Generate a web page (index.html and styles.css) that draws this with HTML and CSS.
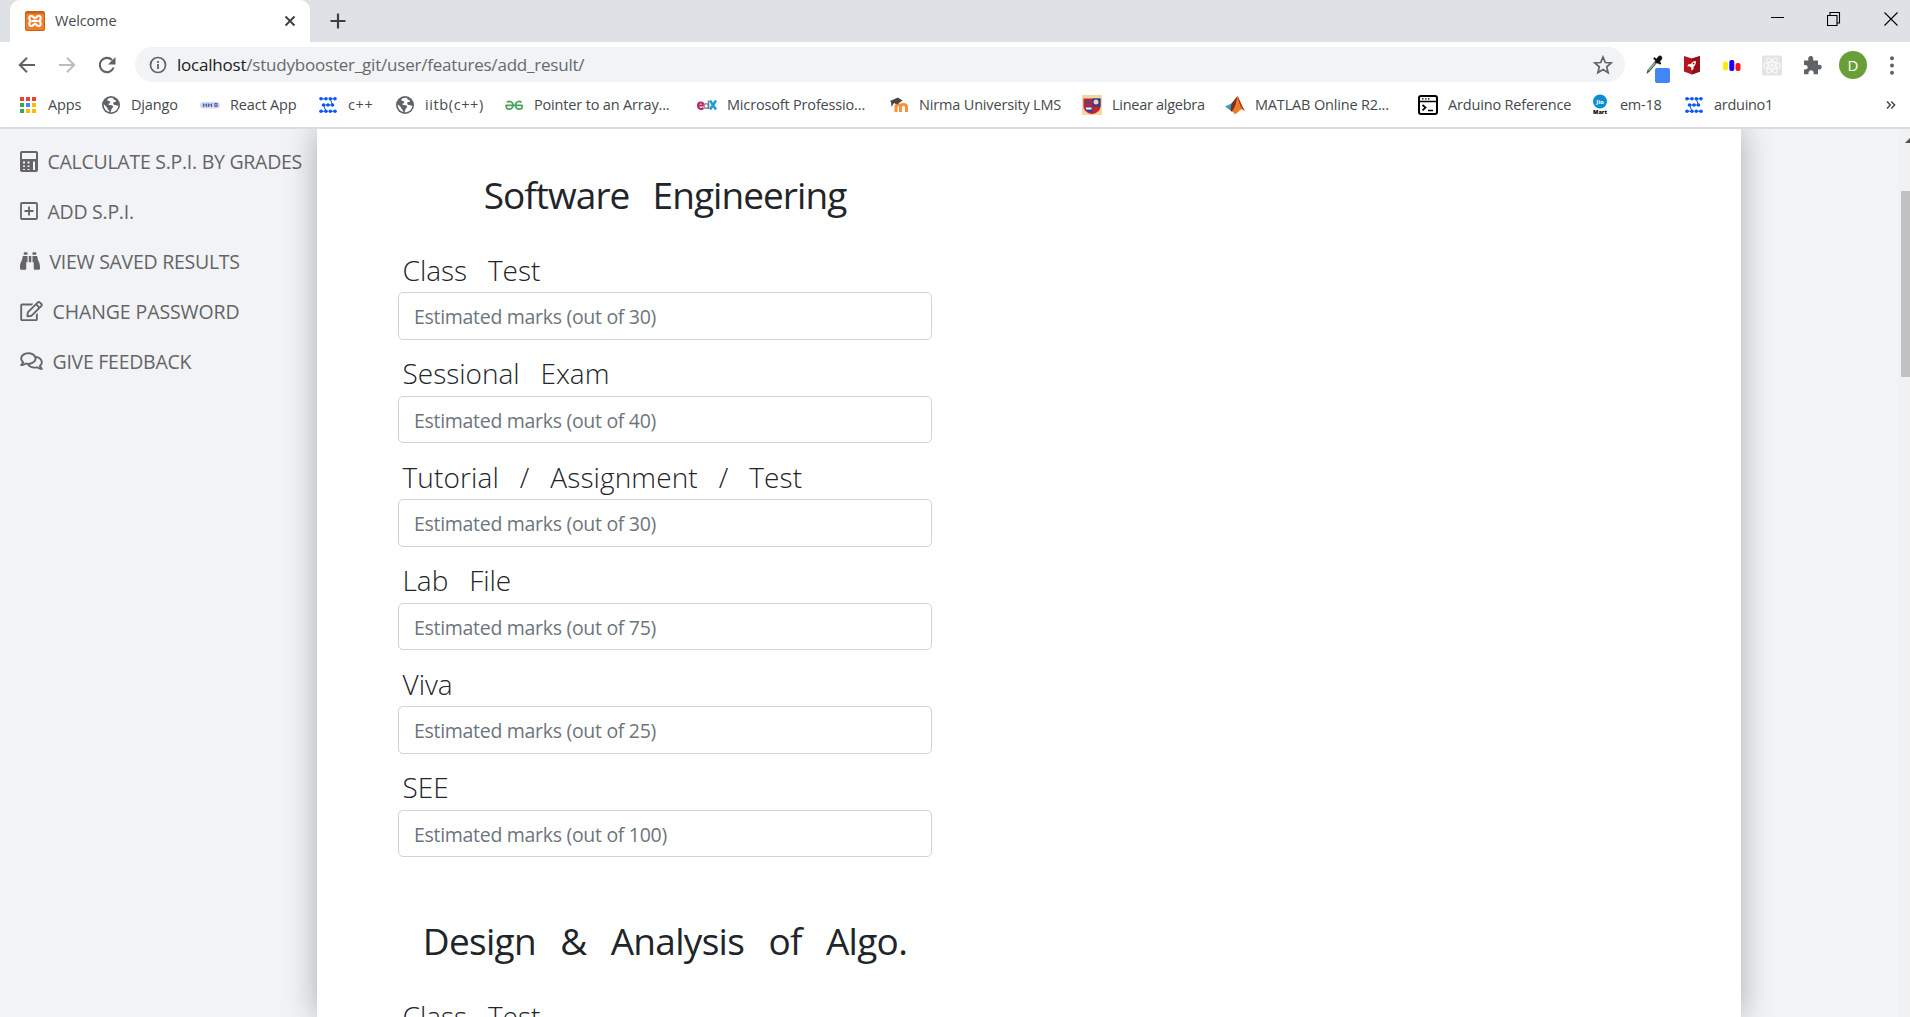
FILE: index.html
```html
<!DOCTYPE html>
<html lang="en">
<head>
<meta charset="utf-8">
<title>Welcome</title>
<link rel="stylesheet" href="styles.css">
</head>
<body>
<svg class="defs" width="0" height="0" aria-hidden="true">
  <symbol id="globe" viewBox="0 0 18 18"><circle cx="9" cy="9" r="9" fill="#5f6368"/><path d="M9.500 1.800C7 2 5 3 5.300 4.200S8 4.500 8.200 6 6 7.400 6.500 8.500s4 .2 4.500 1.800-1.300 1.700-1.600 3.200-1.200 2.800-.2 2.900c4-.2 7-3.200 7.200-6.800-1.400.6-2.300-.6-3.500-.5S11 8 11.200 6.800 14.500 6.300 14 5 11 3.800 11.300 2.200zM1.800 8.300C1.600 12 4 15.300 7.300 16c.2-1.200-.6-1.800-1.300-2.400S5.600 12 4.600 11 2.600 9.300 1.800 8.300z" fill="#fff"/></symbol>
  <symbol id="nodes" viewBox="0 0 18 17"><g fill="#0b57f5" stroke="#0b57f5"><path d="M2 2.300h5M11.300 2.300H16M4.500 8.500h9M2 14.700h5M11.300 14.700H16M11.300 2.300l2 6.200M4.500 8.500L7 14.700" stroke-width="1"/><g stroke="none"><circle cx="2" cy="2.300" r="1.800"/><circle cx="7" cy="2.300" r="1.800"/><circle cx="11.300" cy="2.300" r="1.800"/><circle cx="16" cy="2.300" r="1.800"/><circle cx="4.500" cy="8.500" r="1.800"/><circle cx="9" cy="8.500" r="1.800"/><circle cx="13.500" cy="8.500" r="1.800"/><circle cx="2" cy="14.700" r="1.800"/><circle cx="7" cy="14.700" r="1.800"/><circle cx="11.300" cy="14.700" r="1.800"/><circle cx="16" cy="14.700" r="1.800"/></g></g></symbol>
</svg>

<header class="browser">
  <div class="tabstrip">
    <div class="tab">
      <svg class="favicon" viewBox="0 0 20 20"><rect width="20" height="20" rx="2" fill="#c8611c"/><rect x="1" y="2.500" width="18" height="16.500" rx="1" fill="#f57d26"/><path d="M7.500 5.300C5 4.200 3.800 6 4.400 8c.3 1 1 1.300 1 2s-.8 1-1 2c-.5 2.300 1.200 3.600 3.100 2.700M12.500 5.300c2.500-1.100 3.700.7 3.100 2.700-.3 1-1 1.300-1 2s.8 1 1 2c.5 2.300-1.200 3.600-3.100 2.700M7.500 5.300l2.500 2 2.500-2M7.500 14.700l2.500-2 2.500 2M7.500 10h5" fill="none" stroke="#fff" stroke-width="2.200" stroke-linecap="round"/></svg>
      <span class="tab-title">Welcome</span>
      <svg class="tab-close" viewBox="0 0 12 12"><path d="M1.500 1.500l9 9M10.500 1.500l-9 9" stroke="#3c4043" stroke-width="1.900"/></svg>
    </div>
    <svg class="new-tab" viewBox="0 0 16 16"><path d="M8 .5v15M.5 8h15" stroke="#3c4043" stroke-width="2.200"/></svg>
    <div class="window-buttons">
      <svg viewBox="0 0 14 14"><path d="M1 5.500h13" stroke="#000"/></svg>
      <svg viewBox="0 0 14 14"><path d="M.5 3.500h9.500v10H.5zM3 3.500v-3h9.500v10.500H10" fill="none" stroke="#000" stroke-width="1.100"/></svg>
      <svg viewBox="0 0 14 14"><path d="M.5 .5l13 13M13.500 .5l-13 13" stroke="#000" stroke-width="1.100"/></svg>
    </div>
  </div>

  <div class="toolbar">
    <div class="nav">
      <svg viewBox="0 0 18 18"><path d="M17 9H2M9 1.800L1.800 9 9 16.200" fill="none" stroke="#5f6368" stroke-width="2"/></svg>
      <svg viewBox="0 0 18 18"><path d="M1 9h15M9 1.800L16.200 9 9 16.200" fill="none" stroke="#bbbdbf" stroke-width="2"/></svg>
      <svg viewBox="0 0 18 18"><path d="M15.600 11.500A7.100 7.100 0 1 1 14 4" fill="none" stroke="#5f6368" stroke-width="2.100"/><path d="M17.500 1v7.500H10z" fill="#5f6368"/></svg>
    </div>
    <div class="omnibox">
      <svg class="info" viewBox="0 0 18 18"><circle cx="9" cy="9" r="7.500" fill="none" stroke="#5f6368" stroke-width="1.700"/><path d="M9 8v5M9 5v1.900" stroke="#5f6368" stroke-width="1.800"/></svg>
      <span class="url"><b>localhost</b>/studybooster_git/user/features/add_result/</span>
      <svg class="star" viewBox="0 0 20 20"><path d="M10 2l2.300 5.500 5.900.5-4.500 3.900 1.400 5.800L10 14.600l-5.100 3.100 1.400-5.800L1.800 8l5.900-.5z" fill="none" stroke="#5f6368" stroke-width="1.700"/></svg>
    </div>
    <div class="extensions">
      <svg width="26" height="30" viewBox="0 0 26 30"><rect x="10" y="14" width="15" height="15" rx="2" fill="#4285f4"/><path d="M1.500 20l1-4L10 7l2 1.700-7.500 9z" fill="#3c4a3f"/><path d="M3.500 16.500L10 8.800" stroke="#8fd39c" stroke-width="1.300"/><path d="M9.500 4.500l5.500 4.800" stroke="#111" stroke-width="2.200" stroke-linecap="round"/><path d="M12.500 7l2.500-3" stroke="#111" stroke-width="4.500" stroke-linecap="round"/></svg>
      <svg width="18" height="30" viewBox="0 0 18 30"><path d="M1 2l8 2.500L17 2v15.500L9 20.500l-8-3z" fill="#b5161d"/><path d="M9 4.500L17 2v15.500l-8 3z" fill="#960f18"/><path d="M12.800 7c-3 0-4 1.500-4.800 3l-2.600.2-1.100 2.300 2.300-.2 1.800 1.700-.2 2.400 2.200-1.200.2-2.500c1.500-1 2.500-2.700 2.200-5.700z" fill="#fff"/><circle cx="10.500" cy="9.500" r="1" fill="#b5161d"/></svg>
      <svg width="20" height="30" viewBox="0 0 20 30"><rect x="1" y="7.500" width="5" height="9" rx="2" fill="#ffee0b"/><rect x="7.300" y="6" width="5" height="11" rx="2" fill="#1600fb"/><rect x="13.500" y="9" width="5" height="8" rx="2" fill="#fb1016"/></svg>
      <svg width="22" height="30" viewBox="0 0 22 30"><rect x="1" y="1.500" width="20" height="20" rx="1.500" fill="#e4e4e4"/><g fill="none" stroke="#fafafa" stroke-width="1.100"><ellipse cx="11" cy="11.500" rx="8.500" ry="3.400"/><ellipse cx="11" cy="11.500" rx="8.500" ry="3.400" transform="rotate(60 11 11.500)"/><ellipse cx="11" cy="11.500" rx="8.500" ry="3.400" transform="rotate(120 11 11.500)"/><circle cx="11" cy="11.500" r="1.300"/></g></svg>
      <svg width="19" height="30" viewBox="0 0 19 30"><path d="M1 6.500h4.500C4.600 3.500 6 2 7.700 2s3.200 1.500 2.300 4.500h5V11c3-.8 3.700.7 3.700 2.200S17.500 16 15 15.300v4.900h-4.300c.4-2.600-1-4-2.600-4s-3 1.400-2.600 4H1v-4.800c2.500.4 3.700-.7 3.700-2.200S3.500 10.600 1 11z" fill="#5f6368"/></svg>
      <div class="avatar">D</div>
      <svg width="6" height="30" viewBox="0 0 6 30"><g fill="#5f6368"><circle cx="3" cy="4.300" r="2"/><circle cx="3" cy="11.500" r="2"/><circle cx="3" cy="18.700" r="2"/></g></svg>
    </div>
  </div>

  <nav class="bookmarks">
    <a><svg viewBox="0 0 20 20"><path fill="#ea4335" d="M2 2h4v4H2zM8 2h4v4H8zM14 2h4v4h-4z"/><path fill="#34a853" d="M2 8h4v4H2zM2 14h4v4H2z"/><path fill="#4285f4" d="M8 8h4v4H8z"/><path fill="#fbbc04" d="M14 8h4v4h-4zM8 14h4v4H8zM14 14h4v4h-4z"/></svg>Apps</a>
    <a><svg viewBox="0 0 20 20"><use href="#globe" x="1" y="1" width="18" height="18"/></svg>Django</a>
    <a><svg viewBox="0 0 20 20"><rect x="0" y="7" width="20" height="6.500" rx="3" fill="#d3daf0"/><path d="M3.500 12V8.500M3.500 10h3M6.500 12V8.500M8.500 12V8.500M8.500 10h3M11.500 12V8.500M15 8.500h2v3h-2z" stroke="#5560a8" stroke-width="1.200" fill="none"/></svg>React App</a>
    <a class="wide"><svg viewBox="0 0 20 20"><use href="#nodes" x="1" y="1.500" width="18" height="17"/></svg>c++</a>
    <a class="wide"><svg viewBox="0 0 20 20"><use href="#globe" x="1" y="1" width="18" height="18"/></svg>iitb(c++)</a>
    <a><svg viewBox="0 0 20 20"><path d="M1.500 10.300h17M3 7.500c2-2 6-1 6 2.800S5.500 14.500 4 14c-1.500-.5-2-2-1.800-3.700M17.500 7.500c-2-2-6-1-6 2.800s3.500 4.200 5 3.700c1.500-.5 2-2 1.800-3.700" fill="none" stroke="#4b9f5f" stroke-width="1.700"/></svg>Pointer to an Array...</a>
    <a><svg viewBox="0 0 20 20"><path d="M1 10.500h5.500C6.500 6.500 1 6.500 1 10.500s4 4 5.500 2.500" fill="none" stroke="#b72667" stroke-width="2"/><circle cx="9.300" cy="11" r="2.300" fill="none" stroke="#8d90a0" stroke-width="1.600"/><path d="M11.500 5.500v8.500" stroke="#777c8c" stroke-width="1.500"/><path d="M13 5.500l6 9M19 5.500l-6 9" stroke="#1f9fd8" stroke-width="2.500"/></svg>Microsoft Professio...</a>
    <a><svg viewBox="0 0 20 20"><path d="M7 17v-5c0-3 4.500-3 4.500 0v5M11.500 12c0-3.500 6-3.500 6 0v5" fill="none" stroke="#f6923a" stroke-width="3"/><path d="M1 6l8-3.500 4.500 3L8 9.500 5 8 2.500 12 2 7z" fill="#4a4744"/></svg>Nirma University LMS</a>
    <a class="tight"><svg viewBox="0 0 20 20"><rect width="20" height="20" fill="#ecd9a6"/><path d="M1.500 3.500h17v8c0 4-4 7-8.500 7.500-4.500-.5-8.500-3.500-8.500-7.500z" fill="#c9202c"/><path d="M10.500 3.500h8v8h-8z" fill="#24408e"/><path d="M3 11.500h7.500v6C6 17 3 15 3 11.500z" fill="#2746a0"/><path d="M3.500 12.500h6v2h-5z" fill="#fff"/><circle cx="14" cy="7" r="2.500" fill="#e7d7b0"/><path d="M3 5h6v4H3z" fill="#6b3a7a"/></svg>Linear algebra</a>
    <a><svg viewBox="0 0 20 20"><path d="M0 11.500l6.500-3 3 3-4 4z" fill="#3e9dba"/><path d="M6.500 8.500L12.500 1 11 13l-4 4-1.500-1.500z" fill="#7b2d1e"/><path d="M12.500 1C14 3 17 12 20 16c-3-2-4-2-6 0-1.500 2-3 3-4.500 3C9 18 8 16.500 7 16c3-2 4.500-10 5.500-15z" fill="#ef7b1f"/><path d="M12.500 1c1.500 2 4.500 11 7.500 15-4-2.500-5.500-6-7.500-15z" fill="#a8321c"/></svg>MATLAB Online R2...</a>
    <a><svg viewBox="0 0 20 20"><rect x="1" y="1" width="18" height="18" rx="2" fill="none" stroke="#000" stroke-width="2"/><path d="M1 6.500h18" stroke="#000" stroke-width="1.500"/><path d="M4 3.800h1.500M7 3.800h1.500M10 3.800h1.500" stroke="#000" stroke-width="1.300"/><path d="M4.500 10l3 2.500-3 2.800M10 15.500h5" fill="none" stroke="#000" stroke-width="1.700"/></svg>Arduino Reference</a>
    <a class="tight"><svg viewBox="0 0 20 20"><circle cx="10" cy="6.500" r="7" fill="#0c8fd1"/><text x="10" y="9" class="jio">Jio</text><text x="10" y="18.800" class="mart">Mart</text></svg>em-18</a>
    <a class="tight"><svg viewBox="0 0 20 20"><use href="#nodes" x="1" y="1.500" width="18" height="17"/></svg>arduino1</a>
    <svg class="more" viewBox="0 0 10 10"><path d="M1 1.500L4.300 5 1 8.500M5.300 1.500L8.600 5 5.300 8.500" fill="none" stroke="#4a4d51" stroke-width="1.600"/></svg>
  </nav>
</header>

<main class="page">
  <aside class="sidebar">
    <a><svg width="18" height="21" viewBox="0 0 18 21"><path fill-rule="evenodd" d="M2 0h14a2 2 0 0 1 2 2v17a2 2 0 0 1-2 2H2a2 2 0 0 1-2-2V2a2 2 0 0 1 2-2zM2 2v6h14V2zM3 10.500v2h2v-2zM7.500 10.500v2h2v-2zM3 14.500v1.500h2v-1.500zM7.500 14.500v1.500h2v-1.500zM3 18v1h2v-1zM7.500 18v1h2v-1zM13 10.500v8.500h2v-8.500z" fill="#656565"/></svg>CALCULATE S.P.I. BY GRADES</a>
    <a><svg width="18" height="20" viewBox="0 0 18 20"><rect x="1" y="2" width="16" height="16" rx="1" fill="none" stroke="#656565" stroke-width="1.800"/><path d="M9 5.500v9M4.500 10h9" stroke="#656565" stroke-width="1.800"/></svg>ADD S.P.I.</a>
    <a><svg width="20" height="20" viewBox="0 0 512 512"><path d="M416 48c0-8.800-7.200-16-16-16h-64c-8.800 0-16 7.200-16 16v48h96V48zM63.900 159.900C61.400 253.800 3.500 274.200 0 404v44c0 17.700 14.300 32 32 32h96c17.700 0 32-14.300 32-32V288h32V128H95.800c-17.600 0-31.500 14.200-31.900 31.900zm384.200 0c-.4-17.600-14.200-31.900-31.900-31.900H320v160h32v160c0 17.700 14.300 32 32 32h96c17.700 0 32-14.300 32-32v-44c-3.500-129.800-61.400-150.200-63.900-244.100zM176 32h-64c-8.800 0-16 7.200-16 16v48h96V48c0-8.800-7.200-16-16-16zm48 256h64V128h-64v160z" fill="#656565"/></svg>VIEW SAVED RESULTS</a>
    <a><svg width="23" height="20" viewBox="0 0 576 512"><path d="M402.300 344.900l32-32c5-5 13.700-1.500 13.700 5.700V464c0 26.500-21.500 48-48 48H48c-26.500 0-48-21.500-48-48V112c0-26.500 21.500-48 48-48h273.500c7.100 0 10.700 8.600 5.700 13.700l-32 32c-1.500 1.500-3.500 2.300-5.700 2.300H48v352h352V350.500c0-2.100.8-4.100 2.300-5.600zm156.600-201.800L296.300 405.700l-90.400 10c-26.200 2.900-48.500-19.200-45.600-45.600l10-90.400L432.900 17.100c22.900-22.900 59.900-22.900 82.700 0l43.200 43.200c22.900 22.900 22.900 60 .1 82.800zM460.100 174L402 115.900 216.200 301.800l-7.300 65.300 65.300-7.300L460.100 174zm64.800-79.700l-43.200-43.200c-4.100-4.100-10.800-4.100-14.800 0L436 82l58.100 58.100 30.900-30.900c4-4.200 4-10.800-.1-14.900z" fill="#656565"/></svg>CHANGE PASSWORD</a>
    <a><svg width="23" height="20" viewBox="0 0 576 512"><path d="M532 386.200c27.500-27.100 44-61.100 44-98.200 0-80-76.500-146.100-176.200-157.900C368.300 72.500 294.300 32 208 32 93.100 32 0 103.600 0 192c0 37 16.500 71 44 98.200-15.300 30.700-37.300 54.500-37.700 54.900-6.300 6.700-8.100 16.500-4.400 25 3.600 8.500 12 14 21.200 14 53.500 0 96.700-20.200 125.200-38.800 9.200 2.100 18.700 3.700 28.400 4.900C208.100 407.600 281.800 448 368 448c20.800 0 40.800-2.400 59.800-6.800C456.300 459.700 499.400 480 553 480c9.200 0 17.500-5.500 21.200-14 3.600-8.500 1.900-18.300-4.400-25-.4-.3-22.500-24.100-37.800-54.800zm-392.800-92.300L122.100 305c-14.100 9.100-28.500 16.300-43.100 21.400 2.700-4.700 5.400-9.700 8-14.800l15.500-31.100L77.700 256C64.200 242.600 48 220.700 48 192c0-60.700 73.300-112 160-112s160 51.300 160 112-73.300 112-160 112c-16.500 0-33-1.900-49-5.600l-19.800-4.500zM498.300 352l-24.700 24.400 15.500 31.100c2.600 5.100 5.300 10.100 8 14.800-14.600-5.100-29-12.300-43.100-21.400l-17.100-11.100-19.900 4.600c-16 3.700-32.500 5.600-49 5.600-54 0-102.200-20.100-131.300-49.700C338 339.500 416 272.900 416 192c0-3.400-.4-6.700-.7-10C479.700 196.500 528 238.800 528 288c0 28.700-16.200 50.600-29.700 64z" fill="#656565"/></svg>GIVE FEEDBACK</a>
  </aside>

  <section class="sheet">
    <form class="course">
      <h2>Software Engineering</h2>
      <label>Class Test</label><input placeholder="Estimated marks (out of 30)">
      <label>Sessional Exam</label><input placeholder="Estimated marks (out of 40)">
      <label class="long">Tutorial / Assignment / Test</label><input placeholder="Estimated marks (out of 30)">
      <label>Lab File</label><input placeholder="Estimated marks (out of 75)">
      <label>Viva</label><input placeholder="Estimated marks (out of 25)">
      <label>SEE</label><input placeholder="Estimated marks (out of 100)">
    </form>
    <form class="course">
      <h2 class="long">Design &amp; Analysis of Algo.</h2>
      <label>Class Test</label><input placeholder="Estimated marks (out of 30)">
    </form>
  </section>

  <div class="scrollbar"><div class="arrow"></div><div class="thumb"></div></div>
</main>
</body>
</html>
```
FILE: styles.css
```css
* { box-sizing: border-box; }
body {
  margin: 0;
  height: 1017px;
  overflow: hidden;
  display: flex;
  flex-direction: column;
  font-family: "Open Sans", "Noto Sans", sans-serif;
  color: #212529;
  background: #f1f3f7;
}
svg { display: block; flex: none; }
.defs { position: absolute; }

/* Browser frame */
.browser { height: 129px; flex: none; background: #fff; border-bottom: 2px solid #dadce2; }
.tabstrip { height: 42px; background: #dee1e6; display: flex; align-items: center; padding-left: 10px; }
.tab {
  width: 300px; height: 42px; background: #fff; border-radius: 10px 10px 0 0;
  display: flex; align-items: center; padding: 0 14px 0 15px;
}
.favicon { width: 20px; height: 20px; }
.tab-title { flex: 1; margin-left: 10px; padding-bottom: 2px; font-size: 14.5px; letter-spacing: -.15px; color: #45494d; }
.tab-close { width: 12px; height: 12px; }
.new-tab { width: 16px; height: 16px; margin-left: 20px; }
.window-buttons { margin-left: auto; display: flex; gap: 43px; padding-right: 12px; margin-top: -5px; }
.window-buttons svg { width: 14px; height: 14px; }

.toolbar { height: 45px; display: flex; align-items: center; padding-left: 18px; }
.nav { display: flex; gap: 22px; width: 117px; }
.nav svg { width: 18px; height: 18px; }
.omnibox {
  width: 1490px; height: 35px; border-radius: 18px; background: #f1f3f4;
  display: flex; align-items: center; padding: 0 12px 0 14px;
}
.info { width: 18px; height: 18px; }
.url { flex: 1; margin-left: 10px; font-size: 17px; letter-spacing: -.21px; color: #65696d; white-space: nowrap; }
.url b { font-weight: 400; color: #202124; }
.star { width: 20px; height: 20px; }
.extensions { display: flex; align-items: flex-start; margin-left: 20px; height: 22px; }
.avatar {
  width: 28px; height: 28px; border-radius: 50%; background: #689f38; color: #fff;
  font-size: 15px; line-height: 28px; text-align: center; margin: -3px 22px 0 17px;
}
.extensions svg:nth-child(2) { margin-left: 12px; }
.extensions svg:nth-child(3) { margin-left: 21px; }
.extensions svg:nth-child(4) { margin-left: 19px; }
.extensions svg:nth-child(5) { margin-left: 20px; }

.bookmarks {
  display: grid; height: 36px; padding-left: 18px; align-items: center;
  grid-template-columns: 83px 99px 118px 77px 109px 193px 192px 193px 143px 193px 172px 94px 202px 14px;
}
.bookmarks a {
  display: flex; align-items: center; gap: 10px; font-size: 14.5px; line-height: 20px;
  letter-spacing: -.17px; color: #45494d; white-space: nowrap;
}
.bookmarks .wide { letter-spacing: .6px; }
.bookmarks .tight { letter-spacing: -.28px; }
.bookmarks a svg { width: 20px; height: 20px; overflow: visible; }
.bookmarks .more { width: 10px; height: 10px; }
.jio { font: 700 6px "Open Sans", sans-serif; letter-spacing: 0; fill: #fff; text-anchor: middle; }
.mart { font: 800 5.5px "Open Sans", sans-serif; letter-spacing: 0; fill: #000; text-anchor: middle; }

/* Page */
.page { flex: 1; min-height: 0; display: flex; overflow: hidden; }
.sidebar { width: 317px; flex: none; padding: 7px 0 0 20px; }
.sidebar a {
  display: flex; align-items: center; height: 50px; gap: 9.5px;
  font-size: 19.5px; letter-spacing: -.27px; color: #656565; white-space: nowrap;
}
.sidebar a:nth-child(4) { letter-spacing: -.1px; }
.sheet {
  width: 1424px; flex: none; background: #fff;
  box-shadow: 0 0 30px rgba(0, 0, 0, .3);
  padding-left: 81px;
}
.course { width: 534px; height: 746px; padding-top: 36px; display: flex; flex-direction: column; }
h2 {
  margin: 0; font-size: 37px; line-height: 60px; font-weight: 400; text-align: center;
  letter-spacing: -.95px; word-spacing: 14.5px; white-space: nowrap;
}
h2.long { letter-spacing: -.7px; word-spacing: 15.3px; }
label {
  font-size: 28px; line-height: 38px; font-weight: 300; word-spacing: 13.5px;
  padding-left: 4.5px; margin: 14.5px 0 3.5px; white-space: nowrap;
}
label.long { letter-spacing: .12px; }
h2 + label { margin-top: 25.5px; }
input {
  width: 534px; height: 47.5px; flex: none; border: 1px solid #ced4da; border-radius: 5px; padding: 2px 15px 0;
  font-family: inherit; font-size: 19.5px; letter-spacing: -.3px; background: #fff;
}
input::placeholder { color: #6c757d; opacity: 1; }

.scrollbar { margin-left: auto; width: 11px; background: #f1f1f1; overflow: hidden; padding: 9px 0 0 2px; }
.arrow { margin-left: 4px; border: 5px solid transparent; border-top: 0; border-bottom-color: #505050; width: 10px; }
.thumb { width: 9px; height: 186px; margin-top: 48px; background: #c1c1c1; }
```
